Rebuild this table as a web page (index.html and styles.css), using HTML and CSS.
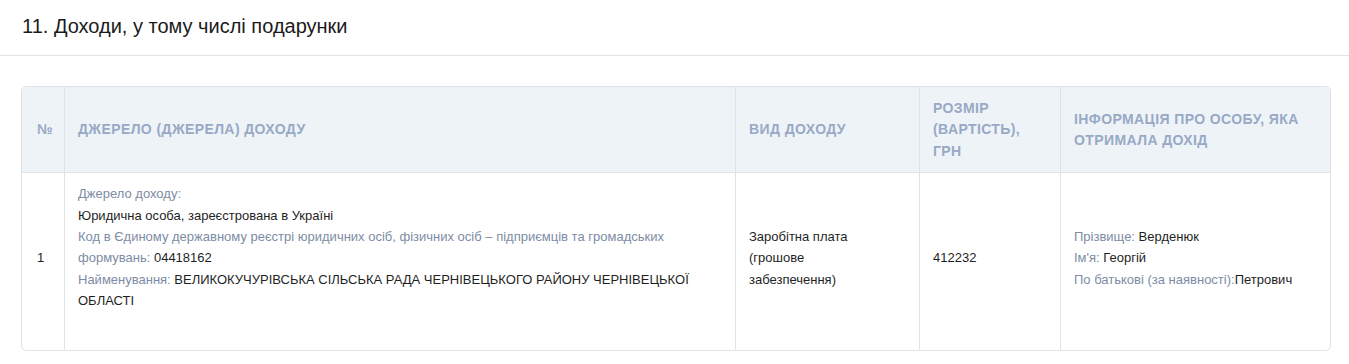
FILE: index.html
```html
<!DOCTYPE html>
<html lang="uk">
<head>
<meta charset="utf-8">
<link rel="stylesheet" href="styles.css">
</head>
<body>
<div class="section-head">
  <h2 class="section-title">11. Доходи, у тому числі подарунки</h2>
</div>
<div class="section-body">
  <div class="table-wrap">
    <table class="decl-table">
      <thead>
        <tr>
          <th class="c-num">№</th>
          <th class="c-src">Джерело (джерела) доходу</th>
          <th class="c-kind">Вид доходу</th>
          <th class="c-size">Розмір (вартість), грн</th>
          <th class="c-person">Інформація про особу, яка отримала дохід</th>
        </tr>
      </thead>
      <tbody>
        <tr>
          <td class="c-num">1</td>
          <td class="c-src">
            <div class="src-block">
              <div class="lbl">Джерело доходу:</div>
              <div class="val">Юридична особа, зареєстрована в Україні</div>
              <div><span class="lbl">Код в Єдиному державному реєстрі юридичних осіб, фізичних осіб – підприємців та громадських формувань:</span> <span class="val">04418162</span></div>
              <div><span class="lbl">Найменування:</span> <span class="val">ВЕЛИКОКУЧУРІВСЬКА СІЛЬСЬКА РАДА ЧЕРНІВЕЦЬКОГО РАЙОНУ ЧЕРНІВЕЦЬКОЇ ОБЛАСТІ</span></div>
            </div>
          </td>
          <td class="c-kind"><div class="kind-text val">Заробітна плата (грошове забезпечення)</div></td>
          <td class="c-size val">412232</td>
          <td class="c-person">
            <div><span class="lbl">Прізвище:</span> <span class="val">Верденюк</span></div>
            <div><span class="lbl">Ім'я:</span> <span class="val">Георгій</span></div>
            <div><span class="lbl">По батькові (за наявності):</span><span class="val">Петрович</span></div>
          </td>
        </tr>
      </tbody>
    </table>
  </div>
</div>
</body>
</html>
```

FILE: styles.css
```css
* { box-sizing: border-box; }

html, body {
  margin: 0;
  padding: 0;
  background: #ffffff;
  font-family: "Liberation Sans", Arial, sans-serif;
  color: #222222;
}

.section-head {
  height: 56px;
  padding: 0 22px;
  display: flex;
  align-items: center;
  border-bottom: 1px solid #e2e2e2;
}

.section-title {
  margin: 0 0 2px 0;
  font-size: 20px;
  font-weight: 400;
  color: #1b1b1b;
}

.section-body {
  padding: 30px 18px 0 21px;
}

.table-wrap {
  border: 1px solid #dfe3e8;
  border-radius: 5px;
  overflow: hidden;
}

.decl-table {
  width: 100%;
  table-layout: fixed;
  border-collapse: separate;
  border-spacing: 0;
}

.decl-table th,
.decl-table td {
  text-align: left;
  border-left: 1px solid #dfe3e8;
}

.decl-table th:first-child,
.decl-table td:first-child {
  border-left: none;
}

.decl-table th {
  background: #eef3f8;
  border-bottom: 1px solid #dfe3e8;
  color: #98a9c5;
  font-size: 14px;
  font-weight: 700;
  text-transform: uppercase;
  letter-spacing: 0.4px;
  line-height: 21.4px;
  padding: 11px 12px 10px 13px;
  vertical-align: middle;
}

.decl-table td {
  font-size: 13px;
  line-height: 21.4px;
  padding: 10px 12px 17px 13px;
  vertical-align: middle;
}

.decl-table .c-num { width: 42px; padding-left: 15px; padding-right: 4px; }
.decl-table .c-src { width: 671px; }
.decl-table .c-kind { width: 184px; }
.decl-table .c-size { width: 141px; }
.decl-table .c-person { width: 271px; }

.src-block {
  padding-bottom: 21px;
}

.lbl { color: #7d8ca4; }
.val { color: #1f1f1f; }

.kind-text {
  max-width: 115px;
}
```
